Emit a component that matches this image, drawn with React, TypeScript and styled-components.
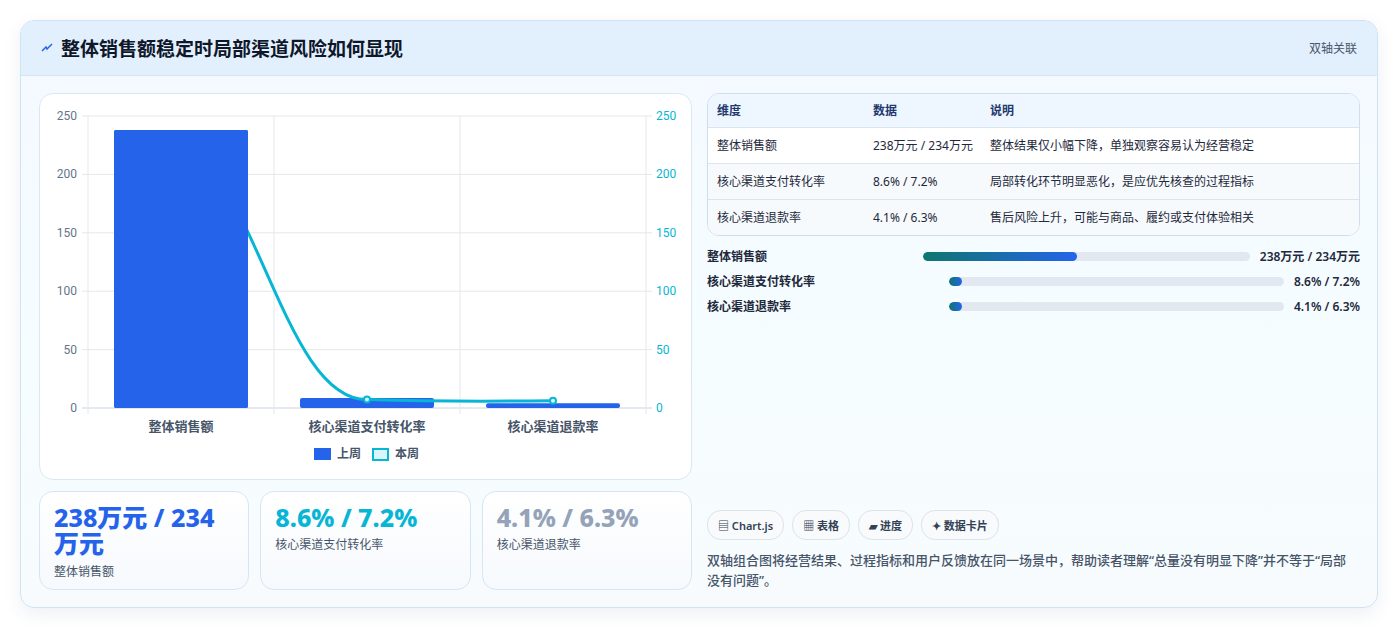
import React from "react";
import styled, { createGlobalStyle } from "styled-components";

const GlobalStyle = createGlobalStyle`
  body {
    margin: 0;
    background: #ffffff;
    font-family: "Noto Sans", "Noto Sans CJK SC", sans-serif;
  }
`;

const Page = styled.div`
  padding: 20px 21px 22px 20px;
`;

const Card = styled.section`
  border: 1px solid #cfe3f3;
  border-radius: 14px;
  background: linear-gradient(180deg, #f3f9ff 0%, #f6fdff 60%, #f7fbfe 100%);
  box-shadow: 0 6px 18px rgba(30, 64, 120, 0.08);
  overflow: hidden;
`;

const Header = styled.header`
  height: 54px;
  display: flex;
  align-items: center;
  justify-content: space-between;
  padding: 0 20px;
  background: #e2f0fd;
  border-bottom: 1px solid #d5e6f5;
`;

const Title = styled.h2`
  margin: 0;
  font-size: 19px;
  font-weight: 700;
  color: #0f172a;
  display: flex;
  align-items: center;
  gap: 8px;
`;

const Tag = styled.span`
  font-size: 12px;
  color: #475569;
`;

const Body = styled.div`
  display: grid;
  grid-template-columns: 653px 653px;
  gap: 15px;
  padding: 17px 18px 17px 18px;
`;

const Column = styled.div`
  display: flex;
  flex-direction: column;
  gap: 11px;
`;

const ChartBox = styled.div`
  height: 387px;
  background: #fff;
  border: 1px solid #dbe7f3;
  border-radius: 14px;
  box-sizing: border-box;
`;

const StatRow = styled.div`
  display: grid;
  grid-template-columns: repeat(3, 1fr);
  gap: 11px;
`;

const Stat = styled.div`
  height: 99px;
  box-sizing: border-box;
  border: 1px solid #d6e6f5;
  border-radius: 14px;
  background: linear-gradient(180deg, #ffffff, #f6f9fd);
  padding: 12px 14px;
`;

const StatValue = styled.div<{ $color: string }>`
  font-size: 25px;
  font-weight: 800;
  line-height: 1.05;
  color: ${(p) => p.$color};
`;

const StatLabel = styled.div`
  font-size: 12px;
  color: #475569;
  margin-top: 5px;
`;

const RightCol = styled.div`
  display: flex;
  flex-direction: column;
`;

const Table = styled.div`
  border: 1px solid #cfdeec;
  border-radius: 12px;
  overflow: hidden;
  background: #fff;
  font-size: 12px;
  color: #1e293b;
`;

const TRow = styled.div<{ $head?: boolean; $alt?: boolean }>`
  display: grid;
  grid-template-columns: 156px 117px 1fr;
  padding: ${(p) => (p.$head ? "8px 9px" : "9px 9px")};
  background: ${(p) => (p.$head ? "#eef6ff" : p.$alt ? "#f7fafd" : "#fff")};
  color: ${(p) => (p.$head ? "#1e3a6e" : "#1e293b")};
  font-weight: ${(p) => (p.$head ? 600 : 400)};
  border-bottom: 1px solid #dbe5ef;
  line-height: 17px;
  &:last-child { border-bottom: 0; }
`;

const Bars = styled.div`
  display: flex;
  flex-direction: column;
  gap: 9px;
  margin-top: 12px;
`;

const BarRow = styled.div`
  display: flex;
  align-items: center;
  font-size: 12px;
  font-weight: 600;
  color: #1e293b;
  height: 16px;
`;

const BarName = styled.span`
  flex: 0 0 auto;
  white-space: nowrap;
`;

const Track = styled.div<{ $left: number }>`
  flex: 1;
  height: 9px;
  border-radius: 5px;
  background: #e2e8f0;
  margin: 0 10px 0 ${(p) => p.$left}px;
  overflow: hidden;
`;

const Fill = styled.div`
  height: 100%;
  border-radius: 5px;
  background: linear-gradient(90deg, #0f766e, #2563eb);
`;

const Chips = styled.div`
  margin-top: auto;
  display: flex;
  gap: 8px;
`;

const Chip = styled.span`
  font-size: 11px;
  font-weight: 600;
  color: #334155;
  border: 1px solid #dbe3ec;
  background: #f8fafc;
  border-radius: 14px;
  padding: 6px 10px;
`;

const Note = styled.p`
  margin: 10px 0 0;
  font-size: 13px;
  line-height: 20px;
  color: #475569;
  font-weight: 500;
  padding-right: 10px;
`;

const X0 = 87, X1 = 645, Y0 = 115, Y1 = 407;
const yOf = (v: number) => Y1 - (v / 250) * (Y1 - Y0);

const Chart = () => {
  const cw = (X1 - X0) / 3;
  const cats = ["整体销售额", "核心渠道支付转化率", "核心渠道退款率"];
  const prev = [238, 8.6, 4.1];
  const ticks = [0, 50, 100, 150, 200, 250];
  const pts = [234, 7.2, 6.3].map((v, i) => [X0 + cw * (i + 0.5), yOf(v)]);
  return (
    <svg width="653" height="387" viewBox="39 93 653 387">
      {ticks.map((t) => (
        <g key={t}>
          <line x1={X0 - 6} x2={X1 + 6} y1={yOf(t)} y2={yOf(t)} stroke={t === 0 ? "#cbd5e1" : "#e5e7eb"} />
          <text x={76} y={yOf(t) + 4} fontSize="12" fill="#64748b" textAnchor="end" fontFamily="Roboto">{t}</text>
          <text x={655} y={yOf(t) + 4} fontSize="12" fill="#06b6d4" fontFamily="Roboto">{t}</text>
        </g>
      ))}
      {[0, 1, 2, 3].map((i) => (
        <line key={i} x1={X0 + cw * i} x2={X0 + cw * i} y1={Y0} y2={Y1 + 6} stroke="#e5e7eb" />
      ))}
      {prev.map((v, i) => (
        <rect key={i} x={X0 + cw * i + 26} y={yOf(v)} width={cw - 52} height={Y1 - yOf(v)} rx="2" fill="#2563eb" />
      ))}
      <path
        d={`M${pts[0][0]} ${pts[0][1]} C${pts[0][0] + 80} ${pts[0][1] + 60} ${pts[1][0] - 80} ${pts[1][1]} ${pts[1][0]} ${pts[1][1]} C${pts[1][0] + 70} ${pts[1][1] + 2} ${pts[2][0] - 70} ${pts[2][1] + 1} ${pts[2][0]} ${pts[2][1]}`}
        fill="none" stroke="#06b6d4" strokeWidth="3"
      />
      <rect x={X0 + 26} y={yOf(238)} width={cw - 52} height={Y1 - yOf(238)} rx="2" fill="#2563eb" />
      {pts.slice(1).map(([x, y], i) => (
        <circle key={i} cx={x} cy={y} r="3" fill="#e0f7fb" stroke="#06b6d4" strokeWidth="2" />
      ))}
      {cats.map((c, i) => (
        <text key={c} x={X0 + cw * (i + 0.5)} y={430} fontSize="13" fill="#475569" textAnchor="middle" fontWeight="600">{c}</text>
      ))}
      <rect x={313} y={447} width={17} height={12} fill="#2563eb" />
      <text x={336} y={457} fontSize="12" fill="#475569" fontWeight="600">上周</text>
      <rect x={372} y={448} width={15} height={11} fill="#d9f5fa" stroke="#06b6d4" strokeWidth="2" />
      <text x={394} y={457} fontSize="12" fill="#475569" fontWeight="600">本周</text>
    </svg>
  );
};

export default function App() {
  return (
    <Page>
      <GlobalStyle />
      <Card>
        <Header>
          <Title>
            <svg width="12" height="12" viewBox="0 0 12 12"><path d="M1 9 L5 5 L6 7 L11 2" stroke="#2563eb" strokeWidth="1.5" fill="none" /></svg>
            整体销售额稳定时局部渠道风险如何显现
          </Title>
          <Tag>双轴关联</Tag>
        </Header>
        <Body>
          <Column>
            <ChartBox><Chart /></ChartBox>
            <StatRow>
              <Stat><StatValue $color="#2563eb">238万元 / 234万元</StatValue><StatLabel>整体销售额</StatLabel></Stat>
              <Stat><StatValue $color="#06b6d4">8.6% / 7.2%</StatValue><StatLabel>核心渠道支付转化率</StatLabel></Stat>
              <Stat><StatValue $color="#94a3b8">4.1% / 6.3%</StatValue><StatLabel>核心渠道退款率</StatLabel></Stat>
            </StatRow>
          </Column>
          <RightCol>
            <Table>
              <TRow $head><span>维度</span><span>数据</span><span>说明</span></TRow>
              <TRow><span>整体销售额</span><span>238万元 / 234万元</span><span>整体结果仅小幅下降，单独观察容易认为经营稳定</span></TRow>
              <TRow $alt><span>核心渠道支付转化率</span><span>8.6% / 7.2%</span><span>局部转化环节明显恶化，是应优先核查的过程指标</span></TRow>
              <TRow $alt><span>核心渠道退款率</span><span>4.1% / 6.3%</span><span>售后风险上升，可能与商品、履约或支付体验相关</span></TRow>
            </Table>
            <Bars>
              <BarRow><BarName>整体销售额</BarName><Track $left={156}><Fill style={{ width: "47%" }} /></Track>238万元 / 234万元</BarRow>
              <BarRow><BarName>核心渠道支付转化率</BarName><Track $left={134}><Fill style={{ width: "4%" }} /></Track>8.6% / 7.2%</BarRow>
              <BarRow><BarName>核心渠道退款率</BarName><Track $left={158}><Fill style={{ width: "4%" }} /></Track>4.1% / 6.3%</BarRow>
            </Bars>
            <Chips>
              <Chip>▤ Chart.js</Chip>
              <Chip>▦ 表格</Chip>
              <Chip>▰ 进度</Chip>
              <Chip>✦ 数据卡片</Chip>
            </Chips>
            <Note>双轴组合图将经营结果、过程指标和用户反馈放在同一场景中，帮助读者理解“总量没有明显下降”并不等于“局部没有问题”。</Note>
          </RightCol>
        </Body>
      </Card>
    </Page>
  );
}
